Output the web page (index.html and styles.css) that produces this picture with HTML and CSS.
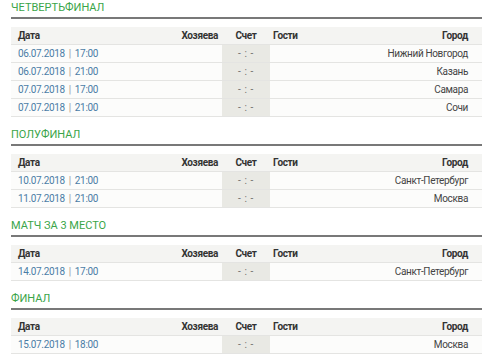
FILE: index.html
```html
<!DOCTYPE html>
<html lang="ru">
<head>
<meta charset="utf-8">
<link rel="stylesheet" href="styles.css">
</head>
<body>
<div class="page">
  <section class="stage">
    <h2 class="stage-title">ЧЕТВЕРТЬФИНАЛ</h2>
    <table class="matches">
      <colgroup><col class="w-date"><col class="w-home"><col class="w-score"><col class="w-guest"><col></colgroup>
      <thead><tr><th class="c-date">Дата</th><th class="c-home">Хозяева</th><th class="c-score">Счет</th><th class="c-guest">Гости</th><th class="c-city">Город</th></tr></thead>
      <tbody>
        <tr><td class="c-date">06.07.2018<span class="sep">|</span>17:00</td><td class="c-home"></td><td class="c-score">- : -</td><td class="c-guest"></td><td class="c-city">Нижний Новгород</td></tr>
        <tr><td class="c-date">06.07.2018<span class="sep">|</span>21:00</td><td class="c-home"></td><td class="c-score">- : -</td><td class="c-guest"></td><td class="c-city">Казань</td></tr>
        <tr><td class="c-date">07.07.2018<span class="sep">|</span>17:00</td><td class="c-home"></td><td class="c-score">- : -</td><td class="c-guest"></td><td class="c-city">Самара</td></tr>
        <tr><td class="c-date">07.07.2018<span class="sep">|</span>21:00</td><td class="c-home"></td><td class="c-score">- : -</td><td class="c-guest"></td><td class="c-city">Сочи</td></tr>
      </tbody>
    </table>
  </section>
  <section class="stage">
    <h2 class="stage-title">ПОЛУФИНАЛ</h2>
    <table class="matches">
      <colgroup><col class="w-date"><col class="w-home"><col class="w-score"><col class="w-guest"><col></colgroup>
      <thead><tr><th class="c-date">Дата</th><th class="c-home">Хозяева</th><th class="c-score">Счет</th><th class="c-guest">Гости</th><th class="c-city">Город</th></tr></thead>
      <tbody>
        <tr><td class="c-date">10.07.2018<span class="sep">|</span>21:00</td><td class="c-home"></td><td class="c-score">- : -</td><td class="c-guest"></td><td class="c-city">Санкт-Петербург</td></tr>
        <tr><td class="c-date">11.07.2018<span class="sep">|</span>21:00</td><td class="c-home"></td><td class="c-score">- : -</td><td class="c-guest"></td><td class="c-city">Москва</td></tr>
      </tbody>
    </table>
  </section>
  <section class="stage">
    <h2 class="stage-title">МАТЧ ЗА 3 МЕСТО</h2>
    <table class="matches">
      <colgroup><col class="w-date"><col class="w-home"><col class="w-score"><col class="w-guest"><col></colgroup>
      <thead><tr><th class="c-date">Дата</th><th class="c-home">Хозяева</th><th class="c-score">Счет</th><th class="c-guest">Гости</th><th class="c-city">Город</th></tr></thead>
      <tbody>
        <tr><td class="c-date">14.07.2018<span class="sep">|</span>17:00</td><td class="c-home"></td><td class="c-score">- : -</td><td class="c-guest"></td><td class="c-city">Санкт-Петербург</td></tr>
      </tbody>
    </table>
  </section>
  <section class="stage">
    <h2 class="stage-title">ФИНАЛ</h2>
    <table class="matches">
      <colgroup><col class="w-date"><col class="w-home"><col class="w-score"><col class="w-guest"><col></colgroup>
      <thead><tr><th class="c-date">Дата</th><th class="c-home">Хозяева</th><th class="c-score">Счет</th><th class="c-guest">Гости</th><th class="c-city">Город</th></tr></thead>
      <tbody>
        <tr><td class="c-date">15.07.2018<span class="sep">|</span>18:00</td><td class="c-home"></td><td class="c-score">- : -</td><td class="c-guest"></td><td class="c-city">Москва</td></tr>
      </tbody>
    </table>
  </section>
</div>
</body>
</html>
```
FILE: styles.css
```css
html, body {
  margin: 0;
  padding: 0;
  background: #ffffff;
  overflow: hidden;
}
body {
  font-family: Roboto, "Liberation Sans", sans-serif;
  font-size: 10px;
  color: #333;
}
.page {
  padding-left: 11px;
}
.stage {
  margin: 0;
}
.stage + .stage .stage-title {
  margin-top: 10px;
}
.stage-title {
  margin: 0 0 8px 0;
  padding: 1px 0 3px 0;
  font-size: 11px;
  line-height: 13px;
  font-weight: normal;
  color: #3aa548;
  border-bottom: 2px solid #787878;
}
.matches {
  width: 100%;
  border-collapse: collapse;
  table-layout: fixed;
  letter-spacing: -0.35px;
}
.w-date { width: 130px; }
.w-home { width: 81px; }
.w-score { width: 48px; }
.w-guest { width: 100px; }
.matches th,
.matches td {
  height: 17px;
  padding: 0;
  border-bottom: 1px solid #e4e4e2;
  white-space: nowrap;
  line-height: 17px;
}
.matches th {
  background: #f4f4f2;
  font-weight: bold;
  color: #333;
  border-top: 0;
}
.matches td {
  background: #fcfcfb;
  color: #444;
}
.c-date { text-align: left; padding-left: 7px !important; }
.matches td.c-date { color: #4b7ca6; }
.sep { color: #999; margin: 0 4px; }
.c-home { text-align: right; padding-right: 4px !important; }
.c-score { text-align: center; }
.matches td.c-score { background: #e9e9e4; color: #6f6f6f; font-size: 10px; letter-spacing: 0.6px; }
.c-guest { text-align: left; padding-left: 3px !important; }
.c-city { text-align: right; padding-right: 14px !important; }
```
